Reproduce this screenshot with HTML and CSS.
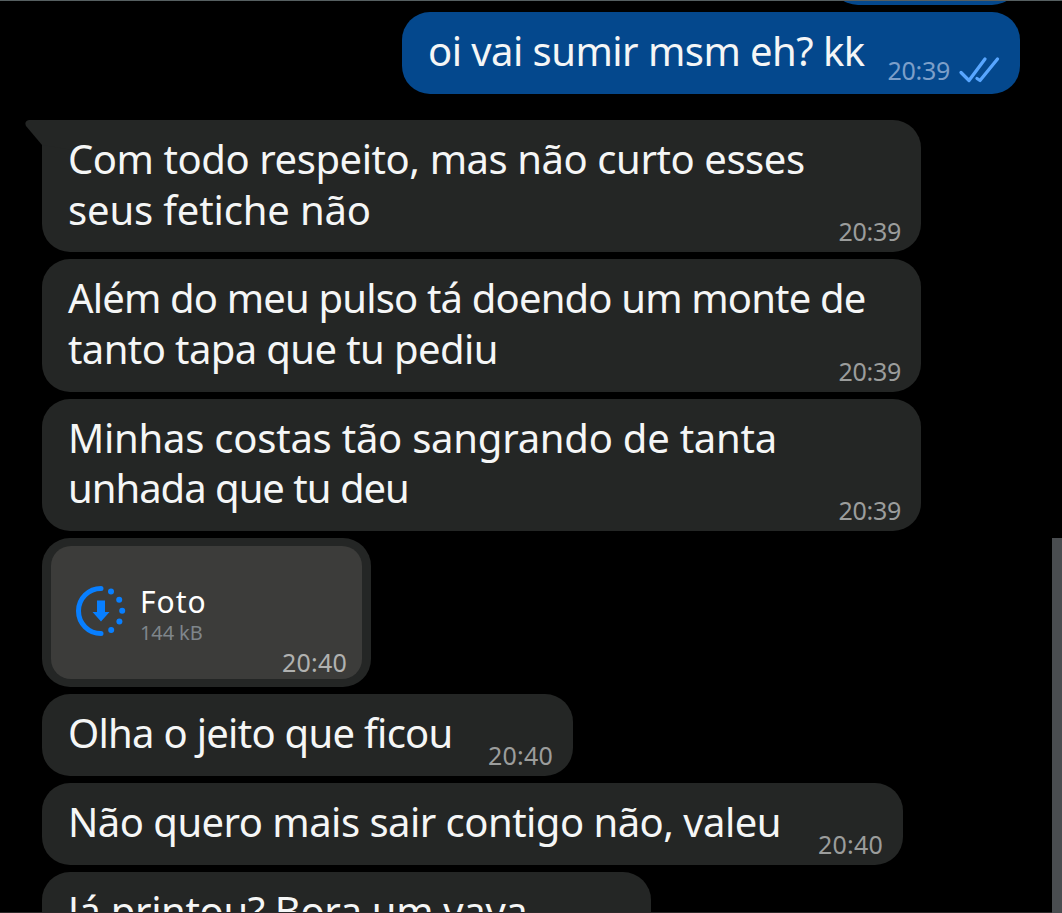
FILE: index.html
```
<!DOCTYPE html>
<html lang="pt-BR">

<head>
    <meta charset="UTF-8">
    <meta name="viewport" content="width=device-width, initial-scale=1.0">
    <title>Chat</title>
    <link rel="stylesheet" href="styles.css">
</head>

<body>
    <main class="chat">
        <div class="message sent previous"></div>

        <div class="message sent">
            <p class="text"><span class="line line-1">oi vai sumir msm eh? kk</span></p>
            <span class="time">20:39</span>
            <svg class="checks" viewBox="0 0 42 28" width="42" height="28">
                <path d="M3 16.500 L11 24.500 L27 3 M19 22.500 L22 24.500 L39.500 3" />
            </svg>
        </div>

        <div class="message received wide first">
            <svg class="tail" viewBox="0 0 48 30" width="48" height="30">
                <path d="M48 0 H4 Q-1 1 1 6 L17 25 L48 30 Z" />
            </svg>
            <p class="text">
                <span class="line line-2">Com todo respeito, mas não curto esses</span>
                <span class="line line-3">seus fetiche não</span>
            </p>
            <span class="time">20:39</span>
        </div>

        <div class="message received wide">
            <p class="text">
                <span class="line line-4">Além do meu pulso tá doendo um monte de</span>
                <span class="line line-5">tanto tapa que tu pediu</span>
            </p>
            <span class="time">20:39</span>
        </div>

        <div class="message received wide">
            <p class="text">
                <span class="line line-6">Minhas costas tão sangrando de tanta</span>
                <span class="line line-7">unhada que tu deu</span>
            </p>
            <span class="time">20:39</span>
        </div>

        <div class="message received photo">
            <div class="photo-card">
                <svg class="download" viewBox="0 0 52 52" width="52" height="52">
                    <path class="ring" d="M26 3.5 A22.5 22.5 0 0 0 26 48.500" />
                    <circle cx="36" cy="6.500" r="3" />
                    <circle cx="44.200" cy="14.700" r="3" />
                    <circle cx="47.200" cy="25.700" r="3" />
                    <circle cx="44.400" cy="36.500" r="3" />
                    <circle cx="36.200" cy="45" r="3" />
                    <path d="M22 15.500 H30 V27 H34.500 L26 36.500 L17.500 27 H22 Z" />
                </svg>
                <div class="photo-info">
                    <span class="photo-title">Foto</span>
                    <span class="photo-size">144 kB</span>
                </div>
                <span class="time late">20:40</span>
            </div>
        </div>

        <div class="message received short">
            <p class="text"><span class="line line-8">Olha o jeito que ficou</span></p>
            <span class="time late">20:40</span>
        </div>

        <div class="message received medium">
            <p class="text"><span class="line line-9">Não quero mais sair contigo não, valeu</span></p>
            <span class="time late">20:40</span>
        </div>

        <div class="message received last">
            <p class="text"><span class="line line-10">Já printou? Bora um vava</span></p>
        </div>
    </main>
    <div class="scrollbar"></div>
</body>

</html>
```
FILE: styles.css
```
* {
    box-sizing: border-box;
}

body {
    margin: 0;
    height: 913px;
    overflow: hidden;
    background-color: #000;
    font-family: "Noto Sans", sans-serif;
    color: #f5f6f6;
}

.chat {
    display: flex;
    flex-direction: column;
    align-items: flex-start;
    gap: 7px;
    height: 913px;
    padding: 0 42px;
    border-top: 1px solid #565f61;
    border-bottom: 1px solid #2b2829;
    overflow: hidden;
}

/* Message bubbles */
.message {
    position: relative;
    display: flex;
    flex-shrink: 0;
    align-items: flex-end;
    justify-content: space-between;
    height: 82px;
    padding: 14px 20px 0 26px;
    border-radius: 28px;
}

.sent {
    align-self: flex-end;
    width: 618px;
    background-color: #04488d;
}

.previous {
    width: 190px;
    height: 60px;
    margin-top: -56px;
}

.received {
    background-color: #242625;
}

.wide {
    width: 879px;
    height: 132.300px;
}

.first {
    margin-top: 19px;
    border-top-left-radius: 0;
}

.short {
    width: 531px;
}

.medium {
    width: 861px;
}

.last {
    width: 609px;
}

.tail {
    position: absolute;
    top: 0;
    left: -17px;
    fill: #242625;
}

/* Message text */
.text {
    position: relative;
    align-self: flex-start;
    flex: 1;
    min-width: 0;
    margin: 0;
    font-size: 40px;
    line-height: 50.500px;
    white-space: nowrap;
}

.line {
    display: block;
    width: max-content;
}

/* Tracking of each line */
.line-1 {
    letter-spacing: -0.540px;
}

.line-2 {
    letter-spacing: -0.430px;
}

.line-3 {
    letter-spacing: -0.150px;
}

.line-4 {
    letter-spacing: -0.830px;
}

.line-5 {
    letter-spacing: -0.600px;
}

.line-6 {
    letter-spacing: -0.240px;
}

.line-7 {
    letter-spacing: -1px;
}

.line-8 {
    letter-spacing: -0.720px;
}

.line-9 {
    letter-spacing: -0.530px;
}

.line-10 {
    letter-spacing: -0.350px;
}

.time {
    margin-bottom: 4px;
    font-size: 25px;
    line-height: 34px;
    letter-spacing: -0.300px;
    color: #9b9d9c;
}

.late {
    letter-spacing: 0.200px;
}

.sent .time {
    margin-bottom: 7px;
    color: #7c9fc9;
}

.checks {
    margin: 0 0 10px 8px;
    fill: none;
    stroke: #58a6ff;
    stroke-width: 3.300;
    stroke-linecap: round;
    stroke-linejoin: round;
}

/* Photo attachment */
.photo {
    width: 329px;
    height: 149px;
    padding: 8px 9px;
}

.photo-card {
    position: relative;
    display: flex;
    align-items: flex-start;
    width: 100%;
    height: 133px;
    padding: 38px 15px 0 24px;
    border-radius: 20px;
    background-color: #3c3c3a;
}

.download {
    margin-top: 1px;
    fill: #087fff;
}

.ring {
    fill: none;
    stroke: #087fff;
    stroke-width: 5;
    stroke-linecap: round;
}

.photo-info {
    display: flex;
    flex-direction: column;
    margin-left: 13px;
}

.photo-title {
    font-size: 30px;
    line-height: 36px;
    letter-spacing: 1px;
    color: #fff;
}

.photo-size {
    margin-top: 1px;
    font-size: 20px;
    line-height: 24px;
    letter-spacing: -0.100px;
    color: #7f868b;
}

.photo-card .time {
    align-self: flex-end;
    margin: 0 0 0 auto;
    color: #b0b1b0;
}

.scrollbar {
    position: fixed;
    top: 538px;
    right: 0;
    bottom: 0;
    width: 10px;
    background-color: #4a4d50;
}
```
